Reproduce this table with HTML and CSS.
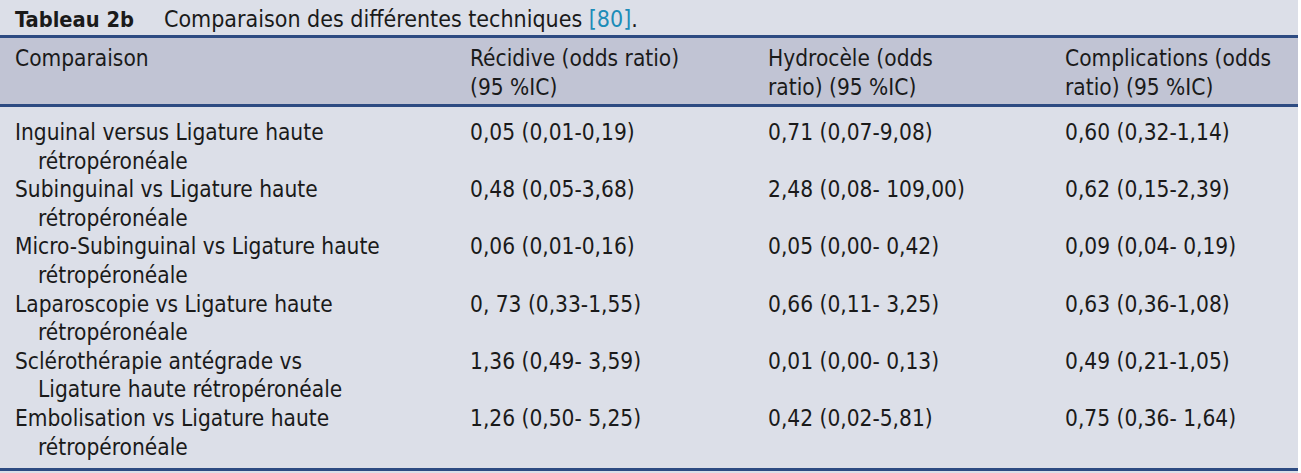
FILE: index.html
```html
<!DOCTYPE html>
<html lang="fr">
<head>
<meta charset="utf-8">
<title>Tableau 2b</title>
<link rel="stylesheet" href="styles.css">
</head>
<body>
<div class="page">
  <div class="caption"><span class="label">Tableau 2b</span><span class="ctext">Comparaison des différentes techniques <span class="ref">[80]</span>.</span></div>
  <table class="tbl">
    <colgroup>
      <col class="c1"><col class="c2"><col class="c3"><col class="c4">
    </colgroup>
    <thead>
      <tr>
        <th>Comparaison</th>
        <th>Récidive (odds ratio) (95 %IC)</th>
        <th>Hydrocèle (odds ratio) (95 %IC)</th>
        <th class="last">Complications (odds ratio) (95 %IC)</th>
      </tr>
    </thead>
    <tbody>
      <tr><td class="hang">Inguinal versus Ligature haute rétropéronéale</td><td>0,05 (0,01-0,19)</td><td>0,71 (0,07-9,08)</td><td>0,60 (0,32-1,14)</td></tr>
      <tr><td class="hang">Subinguinal vs Ligature haute rétropéronéale</td><td>0,48 (0,05-3,68)</td><td>2,48 (0,08- 109,00)</td><td>0,62 (0,15-2,39)</td></tr>
      <tr><td class="hang">Micro-Subinguinal vs Ligature haute rétropéronéale</td><td>0,06 (0,01-0,16)</td><td>0,05 (0,00- 0,42)</td><td>0,09 (0,04- 0,19)</td></tr>
      <tr><td class="hang">Laparoscopie vs Ligature haute rétropéronéale</td><td>0, 73 (0,33-1,55)</td><td>0,66 (0,11- 3,25)</td><td>0,63 (0,36-1,08)</td></tr>
      <tr><td class="hang">Sclérothérapie antégrade vs Ligature haute rétropéronéale</td><td>1,36 (0,49- 3,59)</td><td>0,01 (0,00- 0,13)</td><td>0,49 (0,21-1,05)</td></tr>
      <tr><td class="hang">Embolisation vs Ligature haute rétropéronéale</td><td>1,26 (0,50- 5,25)</td><td>0,42 (0,02-5,81)</td><td>0,75 (0,36- 1,64)</td></tr>
    </tbody>
  </table>
</div>
</body>
</html>
```
FILE: styles.css
```css
html, body {
  margin: 0;
  padding: 0;
  background: #ffffff;
}
.page {
  width: 1298px;
  height: 473px;
  background: #dcdfe8;
  font-family: "DejaVu Sans Condensed", "DejaVu Sans", sans-serif;
  font-size: 22.5px;
  color: #1a1a1a;
  box-sizing: border-box;
}
.caption {
  height: 38px;
  line-height: 28px;
  padding: 5px 0 0 15px;
  box-sizing: border-box;
  border-bottom: 3px solid #2d4b82;
  font-size: 23px;
  white-space: nowrap;
}
.label {
  font-weight: bold;
  font-size: 21.7px;
  margin-right: 30px;
}
.ref {
  color: #1d8cb8;
}
.tbl {
  width: 100%;
  border-collapse: collapse;
  table-layout: fixed;
}
.c1 { width: 455px; }
.c2 { width: 298px; }
.c3 { width: 297px; }
.c4 { width: 248px; }
.tbl th {
  background: #c1c4d4;
  font-weight: normal;
  text-align: left;
  vertical-align: top;
  line-height: 29px;
  padding: 6px 64px 2px 15px;
  border-bottom: 3px solid #2d4b82;
}
.tbl th.last {
  padding-right: 8px;
}
.tbl td {
  vertical-align: top;
  line-height: 28.6px;
  padding: 0 4px 0 15px;
  white-space: nowrap;
}
.tbl tbody tr:first-child td {
  padding-top: 11px;
}
.tbl tbody tr:last-child td {
  padding-bottom: 7px;
  border-bottom: 3px solid #2d4b82;
}
.tbl td.hang {
  white-space: normal;
  padding-left: 38px;
  text-indent: -23px;
  padding-right: 69px;
}
```
